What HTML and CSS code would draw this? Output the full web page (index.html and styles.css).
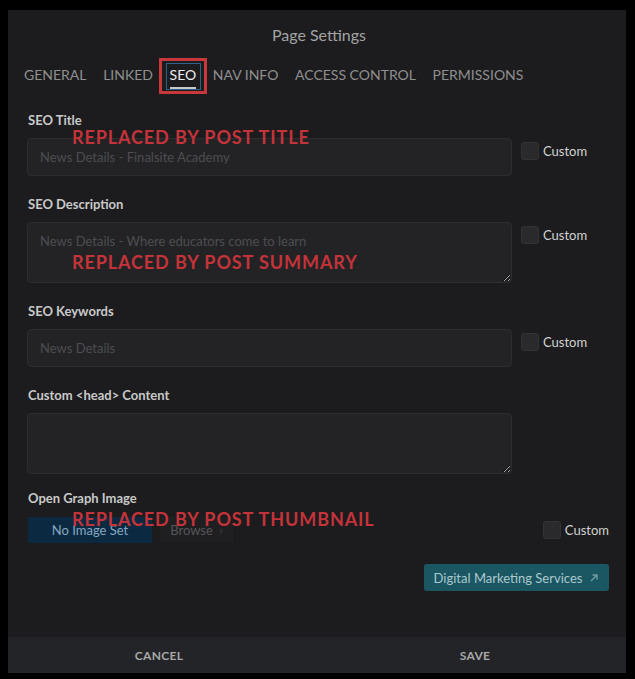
FILE: index.html
```html
<!DOCTYPE html>
<html lang="en">
<head>
<meta charset="utf-8">
<title>Page Settings</title>
<link rel="stylesheet" href="styles.css">
</head>
<body>
<div class="panel">
  <div class="header">Page Settings</div>
  <nav class="tabs">
    <span class="tab">GENERAL</span>
    <span class="tab">LINKED</span>
    <span class="tab active">SEO<span class="annot-box"></span></span>
    <span class="tab">NAV INFO</span>
    <span class="tab">ACCESS CONTROL</span>
    <span class="tab">PERMISSIONS</span>
  </nav>
  <div class="content">
    <div class="field">
      <div class="label">SEO Title</div>
      <div class="row">
        <input class="input" type="text" placeholder="News Details - Finalsite Academy">
        <label class="custom"><span class="check"></span>Custom</label>
      </div>
      <div class="annot annot-title">REPLACED BY POST TITLE</div>
    </div>
    <div class="field">
      <div class="label">SEO Description</div>
      <div class="row">
        <textarea class="input area" placeholder="News Details - Where educators come to learn"></textarea>
        <label class="custom"><span class="check"></span>Custom</label>
      </div>
      <div class="annot annot-summary">REPLACED BY POST SUMMARY</div>
    </div>
    <div class="field">
      <div class="label">SEO Keywords</div>
      <div class="row">
        <input class="input" type="text" placeholder="News Details">
        <label class="custom"><span class="check"></span>Custom</label>
      </div>
    </div>
    <div class="field">
      <div class="label">Custom &lt;head&gt; Content</div>
      <div class="row">
        <textarea class="input area"></textarea>
      </div>
    </div>
    <div class="field og">
      <div class="label">Open Graph Image</div>
      <div class="og-row">
        <button class="btn-noimg">No Image Set</button>
        <button class="btn-browse">Browse <span class="chev">&#8250;</span></button>
        <label class="custom og-custom"><span class="check"></span>Custom</label>
      </div>
      <div class="annot annot-thumb">REPLACED BY POST THUMBNAIL</div>
    </div>
    <div class="dms-row">
      <button class="btn-dms">Digital Marketing Services
        <svg class="ext" width="10" height="10" viewBox="0 0 10 10"><path d="M2 8 L8 2 M3.5 2 H8 V6.5" fill="none" stroke="currentColor" stroke-width="1.4"/></svg>
      </button>
    </div>
  </div>
  <div class="footer">
    <div class="foot-btn">CANCEL</div>
    <div class="foot-btn">SAVE</div>
  </div>
</div>
</body>
</html>
```

FILE: styles.css
```css
* { box-sizing: border-box; }
html, body { margin: 0; padding: 0; background: #000; }
body {
  font-family: Lato, "Open Sans", "Liberation Sans", sans-serif;
  width: 635px;
  height: 679px;
  overflow: hidden;
}
.panel {
  margin: 10px 0 0 8px;
  width: 618px;
  height: 663px;
  background: #1c1c1e;
  display: flex;
  flex-direction: column;
}
.header {
  padding-top: 15px;
  height: 35px;
  line-height: 20px;
  text-align: center;
  font-size: 16px;
  color: #a3a3a3;
  padding-left: 4px;
}
.tabs {
  display: flex;
  gap: 16.6px;
  padding: 20px 0 0 16px;
}
.tab {
  position: relative;
  font-size: 14px;
  line-height: 20px;
  color: #8f8f8f;
  padding-bottom: 2px;
  border-bottom: 2px solid transparent;
}
.tab.active {
  color: #ececec;
  border-bottom-color: #c9c9c9;
}
.tab.active::before {
  content: "";
  position: absolute;
  top: -2px; bottom: -3px; left: -4px; right: -5px;
  border: 1px solid #2e6188;
}
.annot-box {
  position: absolute;
  top: -7px; bottom: -7px; left: -11px; right: -11px;
  border: 3px solid #c8383a;
}
.content {
  padding: 23px 17px 0 19px;
}
.field {
  position: relative;
  margin-bottom: 20px;
}
.label {
  font-size: 13px;
  font-weight: 700;
  line-height: 16px;
  color: #c9c9c9;
  margin: 0 0 10px 1px;
}
.row {
  display: flex;
  align-items: flex-start;
}
.input {
  width: 485px;
  height: 38px;
  background: #232325;
  border: 1px solid #2d2d30;
  border-radius: 4px;
  padding: 0 12px;
  font-family: inherit;
  font-size: 13px;
  color: #ccc;
  outline: none;
}
.input::placeholder { color: #4d4d50; }
.area {
  height: 61px;
  padding: 10px 12px;
  line-height: 16px;
  resize: vertical;
  display: block;
}
.custom {
  display: flex;
  align-items: center;
  margin: 4px 0 0 9px;
  font-size: 13px;
  line-height: 18px;
  color: #d2d2d2;
}
.check {
  width: 18px;
  height: 18px;
  background: #2a2a2d;
  border: 1px solid #333336;
  border-radius: 3px;
  margin-right: 4px;
}
.field.og { margin-top: -4px; margin-bottom: 0; }
.og .label { margin-bottom: 11px; }
.og-row {
  display: flex;
  align-items: center;
  padding-left: 1px;
}
button { font-family: inherit; border: none; cursor: pointer; }
.btn-noimg {
  width: 124px;
  height: 26px;
  background: #0b2a42;
  color: #86a7c2;
  font-size: 13px;
}
.btn-browse {
  width: 73px;
  height: 26px;
  margin-left: 8px;
  background: #1f1f21;
  color: #555558;
  font-size: 13px;
  padding: 0;
}
.chev { color: #3e3e41; margin-left: 3px; }
.og-custom { margin: 0 0 0 auto; }
.dms-row {
  display: flex;
  justify-content: flex-end;
  margin-top: 21px;
}
.btn-dms {
  height: 27px;
  width: 185px;
  background: #1a5762;
  border-radius: 3px;
  color: #acc8ce;
  font-size: 13px;
  display: flex;
  align-items: center;
  justify-content: center;
  gap: 7px;
  padding: 0;
}
.ext { color: #6f9ca5; }
.annot {
  position: absolute;
  left: 45px;
  font-size: 18px;
  line-height: 20px;
  font-weight: 700;
  letter-spacing: 0.9px;
  color: #c4333a;
  white-space: nowrap;
}
.annot-title { top: 15px; }
.annot-summary { top: 56px; }
.annot-thumb { top: 19px; }
.footer {
  margin-top: auto;
  height: 36px;
  background: #232427;
  display: flex;
}
.foot-btn {
  flex: 1;
  display: flex;
  align-items: center;
  justify-content: center;
  font-size: 12px;
  font-weight: 700;
  letter-spacing: 0.3px;
  color: #a8a8a8;
}
.foot-btn:first-child { padding-right: 4px; }
.foot-btn:last-child { padding-left: 10px; }
```
